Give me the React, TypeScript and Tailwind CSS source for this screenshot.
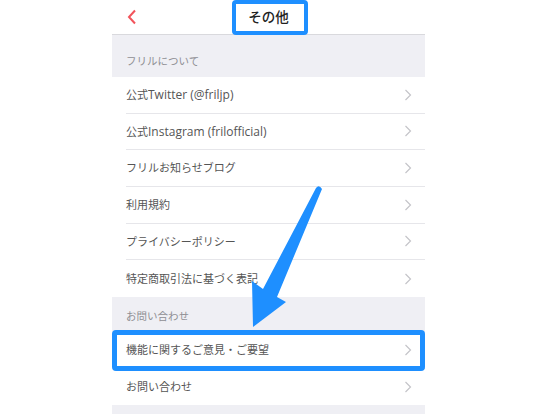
import React from "react";

const font = { fontFamily: '"Open Sans", "Noto Sans CJK JP", sans-serif' };

function Chevron() {
  return (
    <svg width="8" height="12" viewBox="0 0 8 12" className="shrink-0">
      <path d="M1.5 1 L6.5 6 L1.5 11" fill="none" stroke="#c4c4c9" strokeWidth="1.2" />
    </svg>
  );
}

function Row({ label, last }: { label: React.ReactNode; last?: boolean }) {
  return (
    <div className="h-[36.67px] bg-white pl-[14px] flex">
      <div
        className={
          "flex-1 flex items-center justify-between pr-[13px] " +
          (last ? "" : "border-b border-[#e6e6ea]")
        }
      >
        <span className="text-[11px] text-[#555] mt-[1px]">{label}</span>
        <Chevron />
      </div>
    </div>
  );
}

function SectionHeader({ label, h }: { label: string; h: string }) {
  return (
    <div className={"bg-[#efeff4] flex items-end pl-[14px] pb-[7px] " + h}>
      <span className="text-[10.5px] text-[#8e8e93]">{label}</span>
    </div>
  );
}

export default function App() {
  return (
    <div className="relative w-[540px] h-[414px] bg-white overflow-hidden" style={font}>
      <div className="ml-[112px] w-[313px] h-[414px] bg-[#efeff4] flex flex-col">
        <div className="h-[35px] bg-white border-b border-[#d9d9dd] relative flex items-center justify-center shrink-0">
          <svg width="10" height="16" viewBox="0 0 10 16" className="absolute left-[15px] top-[9px]">
            <path d="M8 1.5 L2 8 L8 14.5" fill="none" stroke="#f2545b" strokeWidth="2" />
          </svg>
          <span className="text-[13.5px] font-medium text-[#222] mt-[1px]">その他</span>
        </div>
        <SectionHeader label="フリルについて" h="h-[42px]" />
        <Row
          label={
            <>
              公式<span className="text-[12px]">Twitter (@friljp)</span>
            </>
          }
        />
        <Row
          label={
            <>
              公式<span className="text-[12px]">Instagram (frilofficial)</span>
            </>
          }
        />
        <Row label="フリルお知らせブログ" />
        <Row label="利用規約" />
        <Row label="プライバシーポリシー" />
        <Row label="特定商取引法に基づく表記" last />
        <SectionHeader label="お問い合わせ" h="h-[35px]" />
        <Row label="機能に関するご意見・ご要望" />
        <Row label="お問い合わせ" last />
      </div>

      {/* highlight boxes */}
      <div className="absolute left-[232px] top-[0px] w-[76px] h-[35px] border-[4px] border-[#1e8fff] rounded-[4px]" />
      <div className="absolute left-[112px] top-[330px] w-[313px] h-[41px] border-[5px] border-[#1e8fff] rounded-[4px]" />

      {/* arrow */}
      <svg className="absolute left-0 top-0" width="540" height="414" viewBox="0 0 540 414">
        <path
          d="M316 188 Q319 184 322 189 L277 297 L286 302 L253 327 L252 281 L263 289 Z"
          fill="#1e8fff"
        />
      </svg>
    </div>
  );
}
